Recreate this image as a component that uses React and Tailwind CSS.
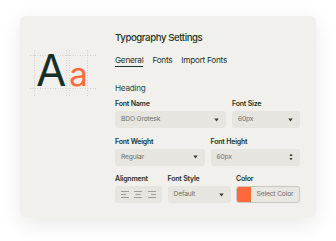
import React from "react";

const green = "text-[#1b3529]";

function Arrow() {
  return (
    <svg width="5" height="4" viewBox="0 0 5 4" className="shrink-0">
      <path d="M0.3 0.6 L4.7 0.6 L2.5 3.4 Z" fill="#3a3a38" />
    </svg>
  );
}

function Spin() {
  return (
    <svg width="4" height="8" viewBox="0 0 4 8" className="shrink-0">
      <path d="M0.3 3 L3.7 3 L2 0.8 Z" fill="#3a3a38" />
      <path d="M0.3 5 L3.7 5 L2 7.2 Z" fill="#3a3a38" />
    </svg>
  );
}

function Field({ label, children }) {
  return (
    <div className="flex flex-col">
      <div className={`text-[7px] leading-[9px] font-semibold tracking-[-0.2px] ${green}`}>{label}</div>
      <div className="mt-[3px] h-[17px]">{children}</div>
    </div>
  );
}

function Select({ value, spin }) {
  return (
    <div className="h-full rounded-[3px] bg-[#e6e5e0] flex items-center justify-between pl-[6px] pr-[7px] text-[6.7px] text-[#6d6d68] tracking-[-0.15px]">
      <span>{value}</span>
      {spin ? <Spin /> : <Arrow />}
    </div>
  );
}

function AlignIcon({ kind }) {
  const full = [0, 8];
  const short = kind === "left" ? [0, 5] : kind === "right" ? [3, 8] : [1.5, 6.5];
  return (
    <svg width="8" height="7" viewBox="0 0 8 7">
      <line x1={full[0]} y1="0.5" x2={full[1]} y2="0.5" stroke="#8a8a85" strokeWidth="0.8" />
      <line x1={short[0]} y1="3.5" x2={short[1]} y2="3.5" stroke="#8a8a85" strokeWidth="0.8" />
      <line x1={full[0]} y1="6.5" x2={full[1]} y2="6.5" stroke="#8a8a85" strokeWidth="0.8" />
    </svg>
  );
}

export default function App() {
  return (
    <div
      className="w-[336px] h-[241px] bg-white pl-[20px] pt-[16px]"
      style={{ fontFamily: "Inter, 'Liberation Sans', sans-serif" }}
    >
      <div className="w-[296px] h-[202px] rounded-[6px] bg-[#f1f0ec] shadow-[0_6px_22px_rgba(0,0,0,0.09)] flex">
        {/* left graphic */}
        <div className="w-[95px] shrink-0">
          <div className="relative mt-[34px] ml-[10px] w-[66px] h-[46px]">
            <svg className="absolute inset-0" width="66" height="46" viewBox="0 0 66 46">
              <g stroke="#cfcfca" strokeWidth="1" strokeDasharray="1 1.5" fill="none">
                <line x1="0" y1="5.5" x2="66" y2="5.5" />
                <line x1="0" y1="38.5" x2="66" y2="38.5" />
                <line x1="4.5" y1="0" x2="4.5" y2="46" />
                <line x1="36.5" y1="0" x2="36.5" y2="46" />
                <line x1="39.5" y1="0" x2="39.5" y2="46" />
                <line x1="57.5" y1="0" x2="57.5" y2="46" />
              </g>
            </svg>
            <div className="absolute left-[6px] top-0 flex items-baseline h-[46px]">
              <span className="text-[44px] leading-[46px] text-[#15302a] tracking-[-1px]" style={{ marginTop: "-3px" }}>A</span>
              <span className="text-[33px] leading-[46px] text-[#ff6a3d] ml-[4px]" style={{ marginTop: "-3px" }}>a</span>
            </div>
          </div>
        </div>

        {/* right content */}
        <div className="flex-1 pr-[16px] pt-[16px]">
          <div className={`text-[9.6px] leading-[12px] font-medium tracking-[-0.4px] ${green}`}>Typography Settings</div>

          <div className={`mt-[11px] flex gap-[9px] text-[8.2px] leading-[11px] tracking-[-0.25px] ${green}`}>
            <span className="border-b-[1.5px] border-[#1b3529]">General</span>
            <span>Fonts</span>
            <span>Import Fonts</span>
          </div>

          <div className={`mt-[16px] text-[8.2px] leading-[11px] tracking-[-0.25px] text-[#2d4a3c]`}>Heading</div>

          <div className="mt-[5px] flex flex-col gap-[8.5px]">
            <div className="grid grid-cols-[111px_1fr] gap-[6px]">
              <Field label="Font Name"><Select value="BDO Grotesk" /></Field>
              <Field label="Font Size"><Select value="60px" /></Field>
            </div>
            <div className="grid grid-cols-2 gap-[6px]">
              <Field label="Font Weight"><Select value="Regular" /></Field>
              <Field label="Font Height"><Select value="60px" spin /></Field>
            </div>
            <div className="grid grid-cols-[47px_63px_1fr] gap-[5.5px]">
              <Field label="Alignment">
                <div className="h-full rounded-[3px] bg-[#e6e5e0] flex items-center justify-around px-[3px]">
                  <AlignIcon kind="left" />
                  <AlignIcon kind="center" />
                  <AlignIcon kind="right" />
                </div>
              </Field>
              <Field label="Font Style"><Select value="Default" /></Field>
              <Field label="Color">
                <div className="h-full rounded-[3px] border border-[#c9c8c2] bg-[#e8e7e2] flex items-stretch overflow-hidden">
                  <div className="w-[14px] bg-[#ff6a3d]" />
                  <div className="flex-1 flex items-center justify-center text-[6.7px] text-[#6d6d68] tracking-[-0.15px]">Select Color</div>
                </div>
              </Field>
            </div>
          </div>
        </div>
      </div>
    </div>
  );
}
